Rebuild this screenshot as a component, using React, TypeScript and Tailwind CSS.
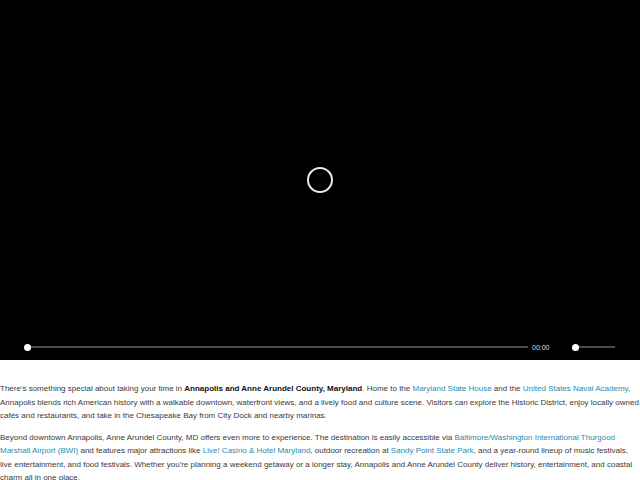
import React from 'react';

const Link = ({ children }: { children: React.ReactNode }) => (
  <a href="#" className="text-[#2a8bb0] no-underline">{children}</a>
);

export default function App() {
  return (
    <div className="w-[640px] h-[480px] overflow-hidden bg-white font-['Liberation_Sans',Arial,sans-serif]">
      {/* Video player */}
      <div className="relative h-[360px] bg-black">
        <div className="absolute left-[307px] top-[167px] w-[26px] h-[26px] rounded-full border-2 border-[#e8e8e8]" />
        <div className="absolute left-0 right-0 top-[341px] h-[12px] flex items-center">
          <div className="ml-[24px] w-[504px] relative flex items-center">
            <div className="h-[2px] w-full bg-[#4a4a4a]" />
            <div className="absolute left-0 w-[7px] h-[7px] rounded-full bg-white" />
          </div>
          <span className="ml-[4px] text-[7px] text-[#dddddd] leading-none">00:00</span>
          <div className="ml-[22px] w-[43px] relative flex items-center">
            <div className="h-[2px] w-full bg-[#4a4a4a]" />
            <div className="absolute left-0 w-[7px] h-[7px] rounded-full bg-white" />
          </div>
        </div>
      </div>

      {/* Article text */}
      <div className="pt-[22px] text-[8px] leading-[13.5px] text-[#3a3a3a]">
        <p className="mb-[8px]">
          There's something special about taking your time in <b className="text-[#111]">Annapolis and Anne Arundel County, Maryland</b>. Home to the <Link>Maryland State House</Link> and the <Link>United States Naval Academy</Link>, Annapolis blends rich American history with a walkable downtown, waterfront views, and a lively food and culture scene. Visitors can explore the Historic District, enjoy locally owned cafés and restaurants, and take in the Chesapeake Bay from City Dock and nearby marinas.
        </p>
        <p>
          Beyond downtown Annapolis, Anne Arundel County, MD offers even more to experience. The destination is easily accessible via <Link>Baltimore/Washington International Thurgood Marshall Airport (BWI)</Link> and features major attractions like <Link>Live! Casino &amp; Hotel Maryland</Link>, outdoor recreation at <Link>Sandy Point State Park</Link>, and a year-round lineup of music festivals, live entertainment, and food festivals. Whether you're planning a weekend getaway or a longer stay, Annapolis and Anne Arundel County deliver history, entertainment, and coastal charm all in one place.
        </p>
      </div>
    </div>
  );
}
